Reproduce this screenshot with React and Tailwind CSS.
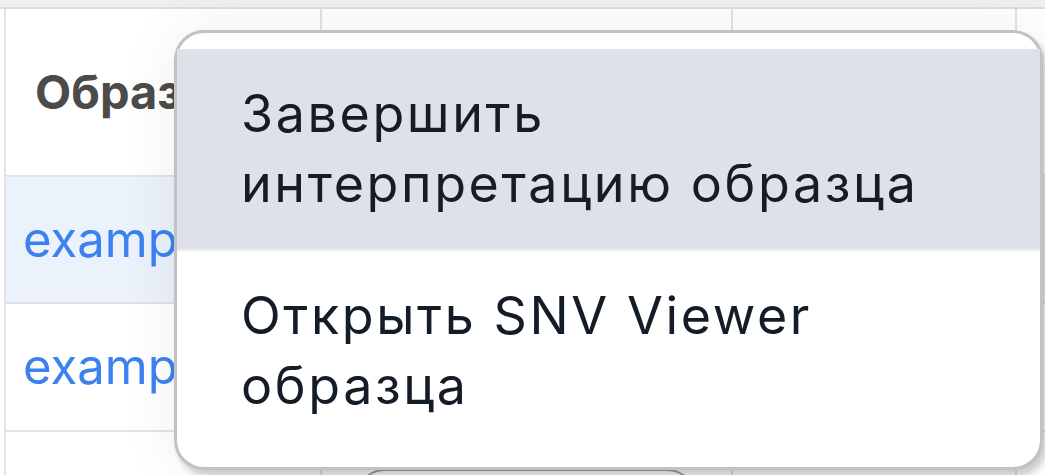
export default function App() {
  return (
    <div className="relative h-[475px] w-[1045px] overflow-hidden bg-white font-['Inter',sans-serif]">
      <div className="h-[9px] border-b-2 border-[#dcdde4] bg-[#efeff2]" />
      <div className="ml-[4px] grid grid-cols-[316px_411px_284px_1fr]">
        {/* header */}
        <div className="flex h-[168px] items-center border-b-2 border-l-2 border-[#e2e3e9] pl-[29px] text-[47px] font-bold text-[#4b4b4b]">
          Образец
        </div>
        <div className="h-[168px] border-b-2 border-l-2 border-[#e2e3e9]" />
        <div className="h-[168px] border-b-2 border-l-2 border-[#e2e3e9]" />
        <div className="h-[168px] border-b-2 border-l-2 border-[#e2e3e9]" />

        {/* row 1 */}
        <div className="flex h-[127px] items-center border-b-2 border-l-2 border-[#e2e3e9] bg-[#ebf2fc] pl-[17px] text-[49px] text-[#3b82f0]">
          example_01
        </div>
        <div className="h-[127px] border-b-2 border-l-2 border-[#e2e3e9] bg-[#ebf2fc]" />
        <div className="h-[127px] border-b-2 border-l-2 border-[#e2e3e9] bg-[#ebf2fc]" />
        <div className="h-[127px] border-b-2 border-l-2 border-[#e2e3e9] bg-[#ebf2fc]" />

        {/* row 2 */}
        <div className="flex h-[128px] items-center border-b-2 border-l-2 border-[#e2e3e9] pl-[17px] text-[49px] text-[#3b82f0]">
          example_02
        </div>
        <div className="h-[128px] border-b-2 border-l-2 border-[#e2e3e9]" />
        <div className="h-[128px] border-b-2 border-l-2 border-[#e2e3e9]" />
        <div className="h-[128px] border-b-2 border-l-2 border-[#e2e3e9]" />

        {/* row 3 */}
        <div className="h-[60px] border-l-2 border-[#e2e3e9]" />
        <div className="h-[60px] border-l-2 border-[#e2e3e9] pl-[33px] pt-[37px]">
          <div className="h-[60px] w-[342px] rounded-full border-2 border-[#9ca3af]" />
        </div>
        <div className="h-[60px] border-l-2 border-[#e2e3e9]" />
        <div className="h-[60px] border-l-2 border-[#e2e3e9]" />
      </div>

      {/* context menu */}
      <div className="absolute left-[174px] top-[30px] w-[869px] rounded-[30px] border-[3px] border-[#c2c2c2] bg-white py-[16px] shadow-[4px_6px_6px_rgba(0,0,0,0.18),0_0_60px_rgba(0,0,0,0.07)]">
        <div className="border-b-2 border-[#eceef2] bg-[#dfe1e8] px-[64px] py-[30px] text-[52px] leading-[70px] tracking-[0.05em] text-[#131c27]">
          Завершить интерпретацию образца
        </div>
        <div className="px-[64px] py-[30px] text-[52px] leading-[70px] tracking-[0.05em] text-[#131c27]">
          Открыть SNV Viewer образца
        </div>
      </div>
    </div>
  );
}
